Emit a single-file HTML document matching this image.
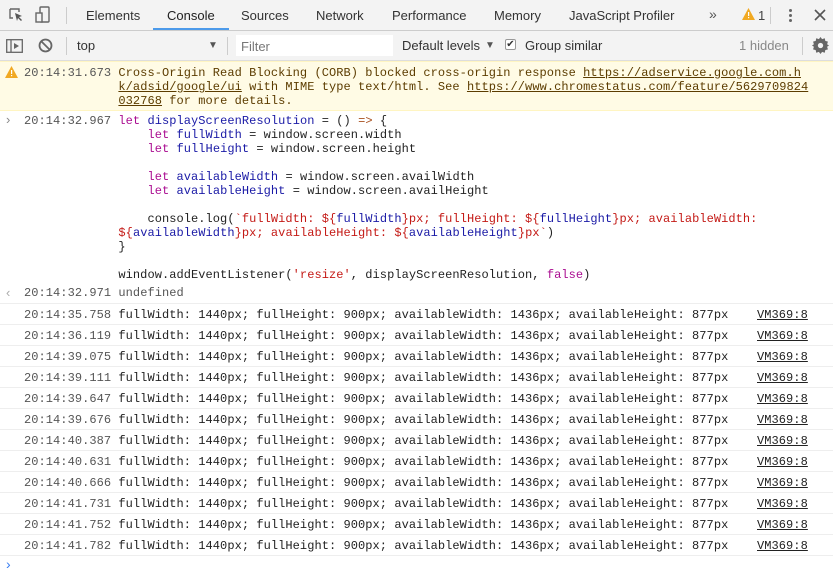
<!DOCTYPE html>
<html><head><meta charset="utf-8"><style>
*{margin:0;padding:0;box-sizing:border-box}
body{width:833px;height:581px;overflow:hidden;background:#fff;font-family:"Liberation Sans",sans-serif;position:relative}
.tb{position:absolute;left:0;top:0;width:833px;height:31px;background:#f3f3f3;border-bottom:1px solid #ccc}
.tb2{position:absolute;left:0;top:31px;width:833px;height:30px;background:#f3f3f3;border-bottom:1px solid #ddd}
.t{position:absolute;top:8px;font-size:13px;color:#333}
.m{font-family:"Liberation Mono",monospace;font-size:12px;white-space:pre;position:absolute;line-height:14px;color:#222;letter-spacing:0.06px}
.ts{color:#555}
.row{position:absolute;left:0;width:833px;border-bottom:1px solid #eee}
.k{color:#aa0d91}.v{color:#1a1aa6}.s{color:#c41a16}.o{color:#a84f1e}
a{color:#222;text-decoration:underline}
</style></head><body>
<div class="tb">
 <svg style="position:absolute;left:8px;top:7px" width="16" height="16" viewBox="0 0 16 16"><path d="M2 2h9v3M2 2v9h3" fill="none" stroke="#666" stroke-width="1.4"/><path d="M7 6l7 3-3 1 3 3-1 1-3-3-1 3z" fill="#555"/></svg>
 <svg style="position:absolute;left:35px;top:6px" width="16" height="18" viewBox="0 0 16 18"><rect x="5" y="1" width="9" height="15" rx="1" fill="none" stroke="#666" stroke-width="1.4"/><rect x="1" y="7" width="6" height="9" fill="#f3f3f3" stroke="#666" stroke-width="1.4"/></svg>
 <div style="position:absolute;left:66px;top:7px;width:1px;height:17px;background:#ccc"></div>
 <span class="t" style="left:86px">Elements</span>
 <span class="t" style="left:167px;color:#222">Console</span>
 <div style="position:absolute;left:153px;top:28px;width:76px;height:2px;background:#4c9aea"></div>
 <span class="t" style="left:241px">Sources</span>
 <span class="t" style="left:316px">Network</span>
 <span class="t" style="left:392px">Performance</span>
 <span class="t" style="left:494px">Memory</span>
 <span class="t" style="left:569px">JavaScript Profiler</span>
 <span class="t" style="left:709px;top:6px;font-size:14px;color:#555">»</span>
 <svg style="position:absolute;left:742px;top:8px" width="13" height="12" viewBox="0 0 13 12"><path d="M6.5 0L13 12H0z" fill="#f1a922"/><rect x="6" y="4" width="1.2" height="4" fill="#fff"/><rect x="6" y="9" width="1.2" height="1.2" fill="#fff"/></svg>
 <span class="t" style="left:758px;color:#444">1</span>
 <div style="position:absolute;left:770px;top:7px;width:1px;height:17px;background:#ccc"></div>
 <span style="position:absolute;left:789px;top:9px;width:3px;height:3px;background:#666;border-radius:2px;box-shadow:0 5px 0 #666,0 10px 0 #666"></span>
 <svg style="position:absolute;left:814px;top:9px" width="12" height="12"><path d="M1 1l10 10M11 1L1 11" stroke="#555" stroke-width="1.6"/></svg>
</div>
<div class="tb2">
 <svg style="position:absolute;left:6px;top:8px" width="17" height="14"><rect x=".7" y=".7" width="15.6" height="12.6" fill="none" stroke="#666" stroke-width="1.3"/><line x1="5" y1="1" x2="5" y2="13" stroke="#666" stroke-width="1.3"/><path d="M8 4l5 3-5 3z" fill="#666"/></svg>
 <svg style="position:absolute;left:38px;top:7px" width="15" height="15"><circle cx="7.5" cy="7.5" r="6" fill="none" stroke="#666" stroke-width="1.8"/><path d="M3.5 3.5l8 8" stroke="#666" stroke-width="1.8"/></svg>
 <div style="position:absolute;left:66px;top:6px;width:1px;height:18px;background:#ccc"></div>
 <span class="t" style="left:77px;top:7px">top</span>
 <span style="position:absolute;left:208px;top:9px;font-size:10px;color:#555">▼</span>
 <div style="position:absolute;left:227px;top:6px;width:1px;height:18px;background:#ccc"></div>
 <div style="position:absolute;left:236px;top:4px;width:157px;height:21px;background:#fff"></div>
 <span class="t" style="left:241px;top:8px;color:#777">Filter</span>
 <span class="t" style="left:402px;top:7px">Default levels</span>
 <span style="position:absolute;left:485px;top:9px;font-size:10px;color:#555">▼</span>
 <div style="position:absolute;left:505px;top:8px;width:11px;height:11px;border:1px solid #999;border-radius:2px;background:#fff;font-size:10px;line-height:9px;text-align:center;color:#333">✔</div>
 <span class="t" style="left:525px;top:7px">Group similar</span>
 <span class="t" style="left:739px;top:7px;color:#888">1 hidden</span>
 <div style="position:absolute;left:802px;top:6px;width:1px;height:18px;background:#ccc"></div>
 <svg style="position:absolute;left:812px;top:6px" width="17" height="17" viewBox="0 0 16 16"><path d="M8 0l1.5 2 2.5-.8.5 2.5 2.5.6-.8 2.5L16 8l-1.8 1.2.8 2.5-2.5.6-.5 2.5-2.5-.8L8 16l-1.5-2-2.5.8-.5-2.5-2.5-.6.8-2.5L0 8l1.8-1.2L1 4.3l2.5-.6.5-2.5 2.5.8z" fill="#666"/><circle cx="8" cy="8" r="2.5" fill="#f3f3f3"/></svg>
</div>
<div style="position:absolute;left:0;top:61px;width:833px;height:50px;background:#fffbe5;border-bottom:1px solid #fff5c2;border-top:1px solid #fff5c2"></div>
<svg style="position:absolute;left:5px;top:66px" width="13" height="12" viewBox="0 0 13 12"><path d="M6.5 0L13 12H0z" fill="#f1a922"/><rect x="6" y="4" width="1.2" height="4" fill="#fff"/><rect x="6" y="9" width="1.2" height="1.2" fill="#fff"/></svg>
<div class="m" style="left:24px;top:66px;color:#5c3c00"><span style="color:#555">20:14:31.673</span> Cross-Origin Read Blocking (CORB) blocked cross-origin response <a style="color:#5c3c00">https://adservice.google.com.h</a>
             <a style="color:#5c3c00">k/adsid/google/ui</a> with MIME type text/html. See <a style="color:#5c3c00">https://www.chromestatus.com/feature/5629709824</a>
             <a style="color:#5c3c00">032768</a> for more details.</div>
<span style="position:absolute;left:6px;top:112px;font-size:13px;color:#888">›</span>
<div class="m" style="left:24px;top:114px"><span class="ts">20:14:32.967</span> <span class="k">let</span> <span class="v">displayScreenResolution</span> = () <span class="o">=&gt;</span> {
                 <span class="k">let</span> <span class="v">fullWidth</span> = window.screen.width
                 <span class="k">let</span> <span class="v">fullHeight</span> = window.screen.height

                 <span class="k">let</span> <span class="v">availableWidth</span> = window.screen.availWidth
                 <span class="k">let</span> <span class="v">availableHeight</span> = window.screen.availHeight

                 console.log(<span class="s">`fullWidth: ${</span><span class="v">fullWidth</span><span class="s">}px; fullHeight: ${</span><span class="v">fullHeight</span><span class="s">}px; availableWidth:</span>
             <span class="s">${</span><span class="v">availableWidth</span><span class="s">}px; availableHeight: ${</span><span class="v">availableHeight</span><span class="s">}px`</span>)
             }

             window.addEventListener(<span class="s">'resize'</span>, displayScreenResolution, <span class="k">false</span>)</div>
<div class="row" style="top:283px;height:21px"></div>
<span style="position:absolute;left:6px;top:285px;font-size:13px;color:#aaa">‹</span>
<div class="m" style="left:24px;top:286px"><span class="ts">20:14:32.971</span> <span style="color:#555">undefined</span></div>
<div id="logs"></div>
<script>
var t=["35.758","36.119","39.075","39.111","39.647","39.676","40.387","40.631","40.666","41.731","41.752","41.782"],h="";
for(var i=0;i<t.length;i++){var y=304+i*21;
h+='<div class="row" style="top:'+y+'px;height:21px"></div><div class="m" style="left:24px;top:'+(y+4)+'px"><span class="ts">20:14:'+t[i]+'</span> fullWidth: 1440px; fullHeight: 900px; availableWidth: 1436px; availableHeight: 877px</div><div class="m" style="left:757px;top:'+(y+4)+'px"><a>VM369:8</a></div>';}
document.getElementById("logs").innerHTML=h;
</script>
<span style="position:absolute;left:6px;top:556px;font-size:14px;color:#367cf1">›</span>
</body></html>
